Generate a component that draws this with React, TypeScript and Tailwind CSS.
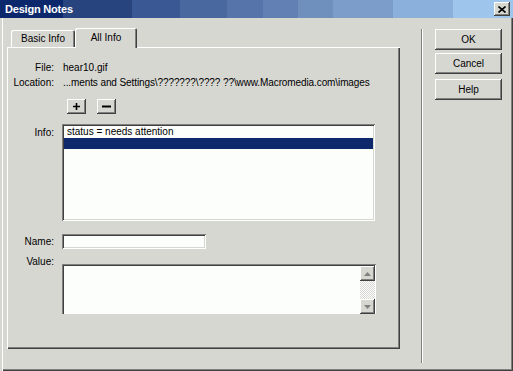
import React from "react";

const raised =
  "shadow-[inset_-1px_-1px_0_#404040,inset_1px_1px_0_#ffffff,inset_-2px_-2px_0_#808080,inset_2px_2px_0_#d7d7d2]";

function Btn({ label, className }: { label: string; className: string }) {
  return (
    <div
      className={
        "w-[67px] h-[21px] flex items-center justify-center bg-[#d7d7d2] text-[10px] text-black shadow-[inset_-1px_-1px_0_#404040,inset_1px_1px_0_#ffffff,inset_-2px_-2px_0_#808080,inset_2px_2px_0_#d7d7d2] " +
        className
      }
    >
      {label}
    </div>
  );
}

export default function App() {
  return (
    <div className="w-[513px] h-[371px] bg-[#d7d7d2] font-['Liberation_Sans',Arial,sans-serif] text-black overflow-hidden">
      {/* Title bar */}
      <div className="h-[18px] flex items-center justify-between bg-[linear-gradient(to_right,#0c286d_0_63px,#27447f_63px_132px,#3a5893_132px_180px,#4a68a0_180px_227px,#5674a9_227px_263px,#6380b4_263px_298px,#6f8fbd_298px_333px,#7c9cca_333px_393px,#8cb0dc_393px_453px,#9ec5ec_453px_513px)] pl-[5px] pr-[3px]">
        <span className="text-white font-bold text-[11px] leading-none tracking-[-0.2px]">Design Notes</span>
        <div className="w-[16px] h-[14px] flex items-center justify-center bg-[#d7d7d2] shadow-[inset_-1px_-1px_0_#404040,inset_1px_1px_0_#ffffff,inset_-2px_-2px_0_#808080,inset_2px_2px_0_#d7d7d2]">
          <svg width="8" height="7" viewBox="0 0 8 7">
            <path d="M0.5 0.5 L7.5 6.5 M7.5 0.5 L0.5 6.5" stroke="#000" strokeWidth="1.6" />
          </svg>
        </div>
      </div>

      {/* Body */}
      <div className="h-[353px] flex shadow-[inset_2px_0_0_#d7d7d2,inset_3px_0_0_#ffffff,inset_-1px_-1px_0_#404040,inset_-2px_-2px_0_#808080]">
        {/* Left side: tabs + panel */}
        <div className="pl-[7px] pt-[10px] w-[400px] flex flex-col">
          <div className="ml-[4px] h-[19px] flex items-end relative z-10">
            <div className="w-[64px] h-[17px] flex items-center justify-center text-[10px] rounded-t-[2px] bg-[#d7d7d2] shadow-[inset_1px_1px_0_#ffffff,inset_-1px_0_0_#404040,inset_-2px_0_0_#808080]">
              Basic Info
            </div>
            <div className="w-[62px] h-[20px] -mb-[1px] pb-[2px] flex items-center justify-center text-[10px] rounded-t-[2px] bg-[#d7d7d2] shadow-[inset_1px_1px_0_#ffffff,inset_-1px_0_0_#404040,inset_-2px_0_0_#808080]">
              All Info
            </div>
          </div>
          <div className="w-[393px] h-[302px] bg-[#d7d7d2] shadow-[inset_1px_1px_0_#ffffff,inset_-1px_-1px_0_#404040,inset_-2px_-2px_0_#808080] pt-[13px] text-[10px]">
            <div className="flex h-[15px] items-center">
              <div className="w-[47px] text-right">File:</div>
              <div className="ml-[9px]">hear10.gif</div>
            </div>
            <div className="flex h-[15px] items-center">
              <div className="w-[47px] text-right">Location:</div>
              <div className="ml-[9px] whitespace-nowrap tracking-[-0.1px]">
                ...ments and Settings\???????\???? ??\www.Macromedia.com\images
              </div>
            </div>
            <div className="flex ml-[60px] mt-[9px] gap-[11px]">
              <div className={"w-[19px] h-[15px] flex items-center justify-center bg-[#d7d7d2] " + raised}>
                <svg width="7" height="7" viewBox="0 0 7 7">
                  <path d="M3.5 0 V7 M0 3.5 H7" stroke="#000" strokeWidth="1.6" />
                </svg>
              </div>
              <div className={"w-[19px] h-[15px] flex items-center justify-center bg-[#d7d7d2] " + raised}>
                <svg width="9" height="3" viewBox="0 0 9 3">
                  <path d="M0 1.5 H9" stroke="#000" strokeWidth="2" />
                </svg>
              </div>
            </div>
            {/* Info list */}
            <div className="flex mt-[10px] items-start">
              <div className="w-[47px] text-right mt-[1px] h-[15px] leading-[15px]">Info:</div>
              <div className="ml-[8px] w-[313px] h-[97px] bg-[#fcfefc] p-[2px] shadow-[inset_1px_1px_0_#808080,inset_-1px_-1px_0_#ffffff,inset_2px_2px_0_#404040,inset_-2px_-2px_0_#d7d7d2]">
                <div className="h-[12px] leading-[12px] pl-[3px] whitespace-nowrap">status = needs attention</div>
                <div className="h-[11px] bg-[#0e286c]" />
              </div>
            </div>
            {/* Name */}
            <div className="flex mt-[13px] items-center">
              <div className="w-[47px] text-right">Name:</div>
              <div className="ml-[8px] w-[144px] h-[15px] bg-[#fcfefc] shadow-[inset_1px_1px_0_#808080,inset_-1px_-1px_0_#ffffff,inset_2px_2px_0_#404040,inset_-2px_-2px_0_#d7d7d2]" />
            </div>
            {/* Value */}
            <div className="flex mt-[15px] items-start">
              <div className="w-[47px] text-right -mt-[10px] h-[15px] leading-[15px]">Value:</div>
              <div className="ml-[8px] w-[314px] h-[50px] bg-[#fcfefc] pt-[2px] pl-[2px] pr-[1px] flex justify-end shadow-[inset_1px_1px_0_#808080,inset_-1px_0_0_#ffffff,inset_2px_2px_0_#404040,inset_-2px_0_0_#d7d7d2]">
                <div className="w-[15px] h-[48px] flex flex-col">
                  <div className={"h-[15px] flex items-center justify-center bg-[#d7d7d2] " + raised}>
                    <svg width="7" height="4" viewBox="0 0 7 4">
                      <path d="M3.5 0 L7 4 L0 4 Z" fill="#808080" />
                    </svg>
                  </div>
                  <div className="flex-1 bg-[image:repeating-conic-gradient(#d7d7d2_0_25%,#ffffff_0_50%)] bg-[length:2px_2px]" />
                  <div className={"h-[15px] flex items-center justify-center bg-[#d7d7d2] " + raised}>
                    <svg width="7" height="4" viewBox="0 0 7 4">
                      <path d="M0 0 L7 0 L3.5 4 Z" fill="#808080" />
                    </svg>
                  </div>
                </div>
              </div>
            </div>
          </div>
        </div>

        {/* Separator */}
        <div className="ml-[21px] mt-[11px] w-[2px] h-[334px] border-l border-l-[#808080] border-r border-r-white" />

        {/* Buttons */}
        <div className="ml-[12px] pt-[11px] flex flex-col">
          <Btn label="OK" className="" />
          <Btn label="Cancel" className="mt-[3px]" />
          <Btn label="Help" className="mt-[5px]" />
        </div>
      </div>
    </div>
  );
}
